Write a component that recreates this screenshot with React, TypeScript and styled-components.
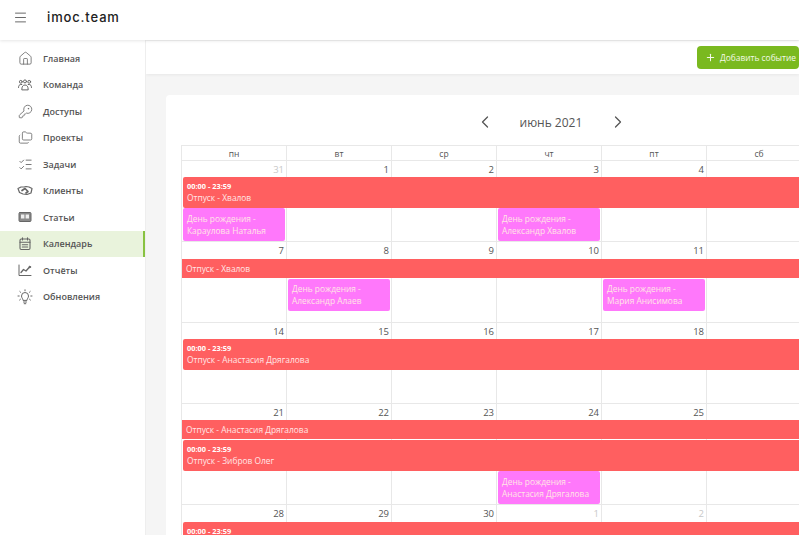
import React from 'react';
import styled, {createGlobalStyle} from 'styled-components';
import {ChevronLeft, ChevronRight, Folders, KeyRound, ListChecks, Menu, Plus, House} from 'lucide-react';

const Svg: React.FC<{children: React.ReactNode}> = ({children}) => (
    <svg width="16" height="16" viewBox="0 0 16 16" fill="none" stroke="currentColor" strokeWidth="1" strokeLinecap="round" strokeLinejoin="round">
        {children}
    </svg>
)

const TeamIcon = () => (
    <Svg>
        <circle cx="3.800" cy="4.800" r="1.400"/>
        <circle cx="8" cy="4.400" r="1.500"/>
        <circle cx="12.200" cy="4.800" r="1.400"/>
        <path d="M1.500 10.500c0-2 1-3 2.300-3h1M14.500 10.500c0-2-1-3-2.300-3h-1M4.800 12.500c0-3 1.200-4.500 3.200-4.500s3.200 1.500 3.200 4.500z"/>
    </Svg>
)

const ClientsIcon = () => (
    <Svg>
        <path d="M1 5.500l3-1.500h3l2-.500 3 .500 3 1.500-1 4.500-4 1.500-4-.5-3.500-1.500z" strokeWidth="1.200"/>
        <path d="M5 7.500l3-2 3 3-2 1.500" strokeWidth="1.700"/>
    </Svg>
)

const ArticlesIcon = () => (
    <Svg>
        <rect x="2" y="3.500" width="12" height="9" rx="1" fill="#8a8a8a"/>
        <rect x="4" y="5.500" width="3.400" height="4" fill="#eee" stroke="none"/>
        <rect x="8.600" y="5.500" width="3.400" height="4" fill="#eee" stroke="none"/>
    </Svg>
)

const CalendarIcon = () => (
    <Svg>
        <rect x="3" y="3" width="10" height="10.500" rx="1.200" strokeWidth="1.100"/>
        <path d="M5.500 1.800v2.200M10.500 1.800v2.200M3 6.300h10M5.300 8.700h5.400M5.300 11h5.400" strokeWidth="1.100"/>
    </Svg>
)

const ReportsIcon = () => (
    <Svg>
        <path d="M2 3v10.500h12"/>
        <path d="M4 10.500l2.500-3 2.500 1.500 3.500-4" strokeWidth="1.300"/>
        <circle cx="12.800" cy="5" r=".8" fill="currentColor"/>
    </Svg>
)

const UpdatesIcon = () => (
    <Svg>
        <path d="M6 11c0-1.500-1.500-2-1.500-4a3.500 3.500 0 0 1 7 0c0 2-1.500 2.500-1.500 4z"/>
        <path d="M6.500 13h3M7.200 14.700h1.600M8 .8v1M2.800 2.500l.8.8M13.200 2.500l-.8.8M1 7h1.200M13.800 7H15M2.600 11l.9-.8M13.400 11l-.9-.8"/>
    </Svg>
)

const navItems = [
    {label: 'Главная', icon: <House size={15} strokeWidth={1.3}/>},
    {label: 'Команда', icon: <TeamIcon/>},
    {label: 'Доступы', icon: <KeyRound size={15} strokeWidth={1.3}/>},
    {label: 'Проекты', icon: <Folders size={15} strokeWidth={1.3}/>},
    {label: 'Задачи', icon: <ListChecks size={15} strokeWidth={1.4}/>},
    {label: 'Клиенты', icon: <ClientsIcon/>},
    {label: 'Статьи', icon: <ArticlesIcon/>},
    {label: 'Календарь', icon: <CalendarIcon/>, active: true},
    {label: 'Отчёты', icon: <ReportsIcon/>},
    {label: 'Обновления', icon: <UpdatesIcon/>},
]

const weekDays = ['пн', 'вт', 'ср', 'чт', 'пт', 'сб']

interface EventType {
    kind: 'vacation' | 'birthday'
    row: number
    col?: number
    time?: string
    lines: string[]
}

interface WeekType {
    rows: string
    days: { n: number, muted?: boolean }[]
    events: EventType[]
}

const range = (from: number) => Array.from({length: 5}, (_, i) => ({n: from + i}))

const fullTime = '00:00 - 23:59'

const weeks: WeekType[] = [
    {
        rows: '16px 31px 34px',
        days: [{n: 31, muted: true}, {n: 1}, {n: 2}, {n: 3}, {n: 4}],
        events: [
            {kind: 'vacation', row: 2, time: fullTime, lines: ['Отпуск - Хвалов']},
            {kind: 'birthday', row: 3, col: 1, lines: ['День рождения -', 'Караулова Наталья']},
            {kind: 'birthday', row: 3, col: 4, lines: ['День рождения -', 'Александр Хвалов']},
        ],
    },
    {
        rows: '17px 20px 33px 11px',
        days: range(7),
        events: [
            {kind: 'vacation', row: 2, lines: ['Отпуск - Хвалов']},
            {kind: 'birthday', row: 3, col: 2, lines: ['День рождения -', 'Александр Алаев']},
            {kind: 'birthday', row: 3, col: 5, lines: ['День рождения -', 'Мария Анисимова']},
        ],
    },
    {
        rows: '16px 31px 34px',
        days: range(14),
        events: [
            {kind: 'vacation', row: 2, time: fullTime, lines: ['Отпуск - Анастасия Дрягалова']},
        ],
    },
    {
        rows: '16px 20px 31px 34px',
        days: range(21),
        events: [
            {kind: 'vacation', row: 2, lines: ['Отпуск - Анастасия Дрягалова']},
            {kind: 'vacation', row: 3, time: fullTime, lines: ['Отпуск - Зибров Олег']},
            {kind: 'birthday', row: 4, col: 4, lines: ['День рождения -', 'Анастасия Дрягалова']},
        ],
    },
    {
        rows: '17px 31px',
        days: [{n: 28}, {n: 29}, {n: 30}, {n: 1, muted: true}, {n: 2, muted: true}],
        events: [
            {kind: 'vacation', row: 2, time: fullTime, lines: []},
        ],
    },
]

const App: React.FC = () => {
    return (
        <Shell>
            <GlobalStyle/>
            <Header>
                <Burger><Menu size={15} strokeWidth={1.4}/></Burger>
                <Logo>imoc.team</Logo>
            </Header>
            <Body>
                <Sidebar>
                    {navItems.map(({label, icon, active}) => (
                        <NavItem key={label} $active={active}>
                            <NavIcon>{icon}</NavIcon>
                            <span>{label}</span>
                        </NavItem>
                    ))}
                </Sidebar>
                <Main>
                    <Toolbar>
                        <AddButton><Plus size={11} strokeWidth={2.2}/>Добавить событие</AddButton>
                    </Toolbar>
                    <Card>
                        <MonthBar>
                            <MonthArrow><ChevronLeft size={20} strokeWidth={1.5}/></MonthArrow>
                            <MonthTitle>июнь 2021</MonthTitle>
                            <MonthArrow><ChevronRight size={20} strokeWidth={1.5}/></MonthArrow>
                        </MonthBar>
                        <Table>
                            <HeadRow>
                                {weekDays.map(d => <HeadCell key={d}>{d}</HeadCell>)}
                            </HeadRow>
                            {weeks.map(week => (
                                <Week key={week.days[0].n} $rows={week.rows}>
                                    {weekDays.map((d, i) => (
                                        <DayCell key={d} $col={i + 1} $muted={week.days[i]?.muted}>{week.days[i]?.n}</DayCell>
                                    ))}
                                    {week.events.map(({kind, row, col, time, lines}) => (
                                        <Event key={lines.join() + row} $kind={kind} $row={row} $col={col} $timed={!!time} $flush={!time && kind === 'vacation'}>
                                            {time && <EventTime>{time}</EventTime>}
                                            {lines.map(line => <div key={line}>{line}</div>)}
                                        </Event>
                                    ))}
                                </Week>
                            ))}
                        </Table>
                    </Card>
                </Main>
            </Body>
        </Shell>
    );
};

export default App;

const GlobalStyle = createGlobalStyle`
  html, body {
    margin: 0;
    background: #fff;
    overflow: hidden;
  }
  * {
    box-sizing: border-box;
  }
`

const Shell = styled.div`
  width: 799px;
  height: 535px;
  overflow: hidden;
  display: flex;
  flex-direction: column;
  font-family: 'Open Sans', sans-serif;
  color: #555;
`

const Header = styled.header`
  height: 40px;
  flex: none;
  display: flex;
  align-items: center;
  padding-bottom: 6px;
  background: #fff;
  box-shadow: 0 1px 3px rgba(0, 0, 0, 0.1);
  position: relative;
  z-index: 2;
`

const Burger = styled.div`
  width: 47px;
  padding-left: 13px;
  display: flex;
  color: #555;
`

const Logo = styled.div`
  font-family: Inter, sans-serif;
  font-size: 13px;
  font-weight: 500;
  color: #222;
  letter-spacing: 0.85px;
`

const Body = styled.div`
  flex: 1;
  min-height: 0;
  display: flex;
`

const Sidebar = styled.nav`
  width: 146px;
  flex: none;
  padding-top: 5px;
  background: #fff;
  border-right: 1px solid #eee;
`

const NavItem = styled.div<{ $active?: boolean }>`
  height: 26.5px;
  display: flex;
  align-items: center;
  gap: 14px;
  padding-left: 21px;
  font-size: 9px;
  font-weight: 600;
  color: #555;
  background: ${p => p.$active ? '#e9f3dc' : 'transparent'};
  border-right: 2px solid ${p => p.$active ? '#88c241' : 'transparent'};
`

const NavIcon = styled.span`
  width: 8px;
  display: flex;
  justify-content: center;
  color: #666;
  svg {
    flex: none;
  }
`

const Main = styled.main`
  flex: 1;
  min-width: 0;
  background: #f5f5f5;
  overflow: hidden;
`

const Toolbar = styled.div`
  height: 33px;
  margin-top: 1px;
  display: flex;
  align-items: center;
  justify-content: flex-end;
  background: #fff;
  box-shadow: 0 1px 3px rgba(0, 0, 0, 0.06);
`

const AddButton = styled.button`
  width: 102px;
  height: 23px;
  flex: none;
  display: flex;
  align-items: center;
  gap: 4px;
  padding: 0 0 0 8px;
  border: none;
  border-radius: 4px;
  background: #7ab91f;
  color: #f4f9ea;
  font-family: inherit;
  font-size: 8.4px;
  white-space: nowrap;
  svg {
    flex: none;
  }
`

const Card = styled.section`
  width: 770px;
  margin: 21px 0 0 20px;
  padding: 0 15px;
  background: #fff;
  border-radius: 4px;
`

const MonthBar = styled.div`
  height: 50px;
  padding-top: 4px;
  display: flex;
  align-items: center;
  justify-content: center;
  gap: 25px;
  color: #555;
`

const MonthArrow = styled.span`
  display: flex;
`

const MonthTitle = styled.h2`
  margin: 0;
  font-size: 12px;
  font-weight: 400;
  width: 63px;
  white-space: nowrap;
`

const Table = styled.div`
  width: 736px;
  border-left: 1px solid #e8e8e8;
  border-top: 1px solid #e8e8e8;
`

const HeadRow = styled.div`
  height: 15px;
  display: grid;
  grid-template-columns: repeat(6, 105px);
`

const HeadCell = styled.div`
  display: flex;
  align-items: center;
  justify-content: center;
  font-size: 8.5px;
  color: #555;
  border-right: 1px solid #e8e8e8;
  border-bottom: 1px solid #e8e8e8;
`

const Week = styled.div<{ $rows: string }>`
  display: grid;
  grid-template-columns: repeat(6, 105px);
  grid-template-rows: ${p => p.$rows};
`

const DayCell = styled.div<{ $col: number, $muted?: boolean }>`
  grid-column: ${p => p.$col};
  grid-row: 1 / -1;
  padding: 1.5px 2px 0 0;
  text-align: right;
  font-size: 9.5px;
  line-height: 13px;
  color: ${p => p.$muted ? '#c8c8c8' : '#555'};
  border-right: 1px solid #e8e8e8;
  border-bottom: 1px solid #e8e8e8;
`

const Event = styled.div<{ $kind: string, $row: number, $col?: number, $flush?: boolean, $timed?: boolean }>`
  grid-row: ${p => p.$row};
  grid-column: ${p => p.$col ? p.$col : '1 / -1'};
  margin: ${p => p.$kind === 'birthday' ? '0 2px 1px 1px' : p.$flush ? '0 0 1px 0' : '0 0 0 1px'};
  padding: ${p => p.$timed ? '4px 4px 0' : '0 4px'};
  display: flex;
  flex-direction: column;
  justify-content: ${p => p.$timed ? 'flex-start' : 'center'};
  overflow: hidden;
  white-space: nowrap;
  color: #ffe6e6;
  font-size: 8.4px;
  line-height: 12px;
  border-radius: ${p => p.$kind === 'birthday' ? '2px' : p.$flush ? '0' : '2px 0 0 2px'};
  background: ${p => p.$kind === 'birthday' ? '#ff78fb' : '#ff5f60'};
`

const EventTime = styled.div`
  font-size: 7.4px;
  font-weight: 700;
  line-height: 11px;
  color: #fff;
`
